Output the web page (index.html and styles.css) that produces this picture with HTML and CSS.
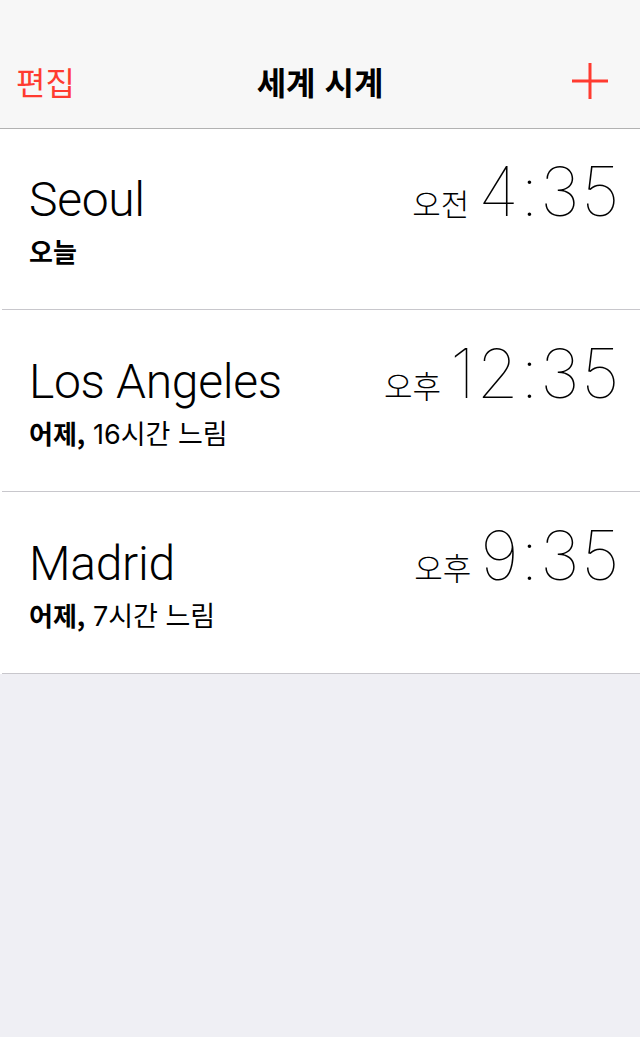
FILE: index.html
```html
<!DOCTYPE html>
<html lang="ko">
<head>
<meta charset="utf-8">
<title>세계 시계</title>
<link rel="stylesheet" href="styles.css">
</head>
<body>
<div class="screen">
  <header class="navbar">
    <span class="nav-edit">편집</span>
    <span class="nav-title">세계 시계</span>
    <span class="nav-add" aria-label="추가">
      <svg width="36" height="36" viewBox="0 0 36 36"><path d="M18 0 V36 M0 18 H36" stroke="#ff3b30" stroke-width="3" fill="none"/></svg>
    </span>
  </header>
  <ul class="clock-list">
    <li class="clock-row">
      <div class="place">
        <div class="city">Seoul</div>
        <div class="sub"><b>오늘</b></div>
      </div>
      <div class="time"><span class="ampm">오전</span><span class="digits">4:35</span></div>
    </li>
    <li class="clock-row">
      <div class="place">
        <div class="city">Los Angeles</div>
        <div class="sub"><b>어제,</b> 16시간 느림</div>
      </div>
      <div class="time"><span class="ampm">오후</span><span class="digits">12:35</span></div>
    </li>
    <li class="clock-row">
      <div class="place">
        <div class="city">Madrid</div>
        <div class="sub"><b>어제,</b> 7시간 느림</div>
      </div>
      <div class="time"><span class="ampm">오후</span><span class="digits">9:35</span></div>
    </li>
  </ul>
</div>
</body>
</html>
```
FILE: styles.css
```css
html, body {
  margin: 0;
  padding: 0;
  background: #efeff4;
}
.screen {
  width: 640px;
  min-height: 1037px;
  background: #efeff4;
  font-family: "Inter", "Noto Sans CJK KR", sans-serif;
  color: #000;
}
.navbar {
  box-sizing: border-box;
  height: 129px;
  padding: 33px 16px 0 16px;
  background: #f7f7f7;
  border-bottom: 1px solid #b2b2b2;
  display: grid;
  grid-template-columns: 1fr auto 1fr;
  align-items: center;
  font-family: "Noto Sans CJK KR", sans-serif;
  font-size: 32px;
  line-height: 40px;
}
.nav-edit {
  color: #ff3b30;
  font-weight: 400;
  justify-self: start;
}
.nav-title {
  font-weight: 700;
}
.nav-add {
  justify-self: end;
  margin-right: 16px;
  display: flex;
}
.nav-add svg {
  display: block;
}
.clock-list {
  list-style: none;
  margin: 0;
  padding: 0;
  background: #fff;
}
.clock-row {
  box-sizing: border-box;
  height: 182px;
  display: flex;
  align-items: baseline;
  justify-content: space-between;
  padding: 42px 19px 0 29px;
  position: relative;
}
.clock-row:first-child {
  height: 181px;
}
.clock-row:not(:first-child) {
  padding-top: 43px;
}
.clock-row::after {
  content: "";
  position: absolute;
  left: 2px;
  right: 0;
  bottom: 0;
  height: 1px;
  background: #c8c7cc;
}
.city {
  font-family: "Roboto", sans-serif;
  font-weight: 300;
  font-size: 48px;
  line-height: 56px;
  letter-spacing: -0.3px;
}
.sub {
  margin-top: 7px;
  font-size: 27px;
  line-height: 32px;
  font-weight: 400;
}
.sub b {
  font-family: "Noto Sans CJK KR", sans-serif;
  font-weight: 700;
  font-size: 26px;
}
.time {
  display: flex;
  align-items: baseline;
}
.ampm {
  font-family: "Noto Sans CJK KR", sans-serif;
  font-weight: 300;
  font-size: 31px;
  line-height: 40px;
  margin-right: 9px;
}
.digits {
  font-family: "Inter", sans-serif;
  font-weight: 100;
  font-size: 68px;
  line-height: 40px;
  letter-spacing: 1.5px;
}
```
